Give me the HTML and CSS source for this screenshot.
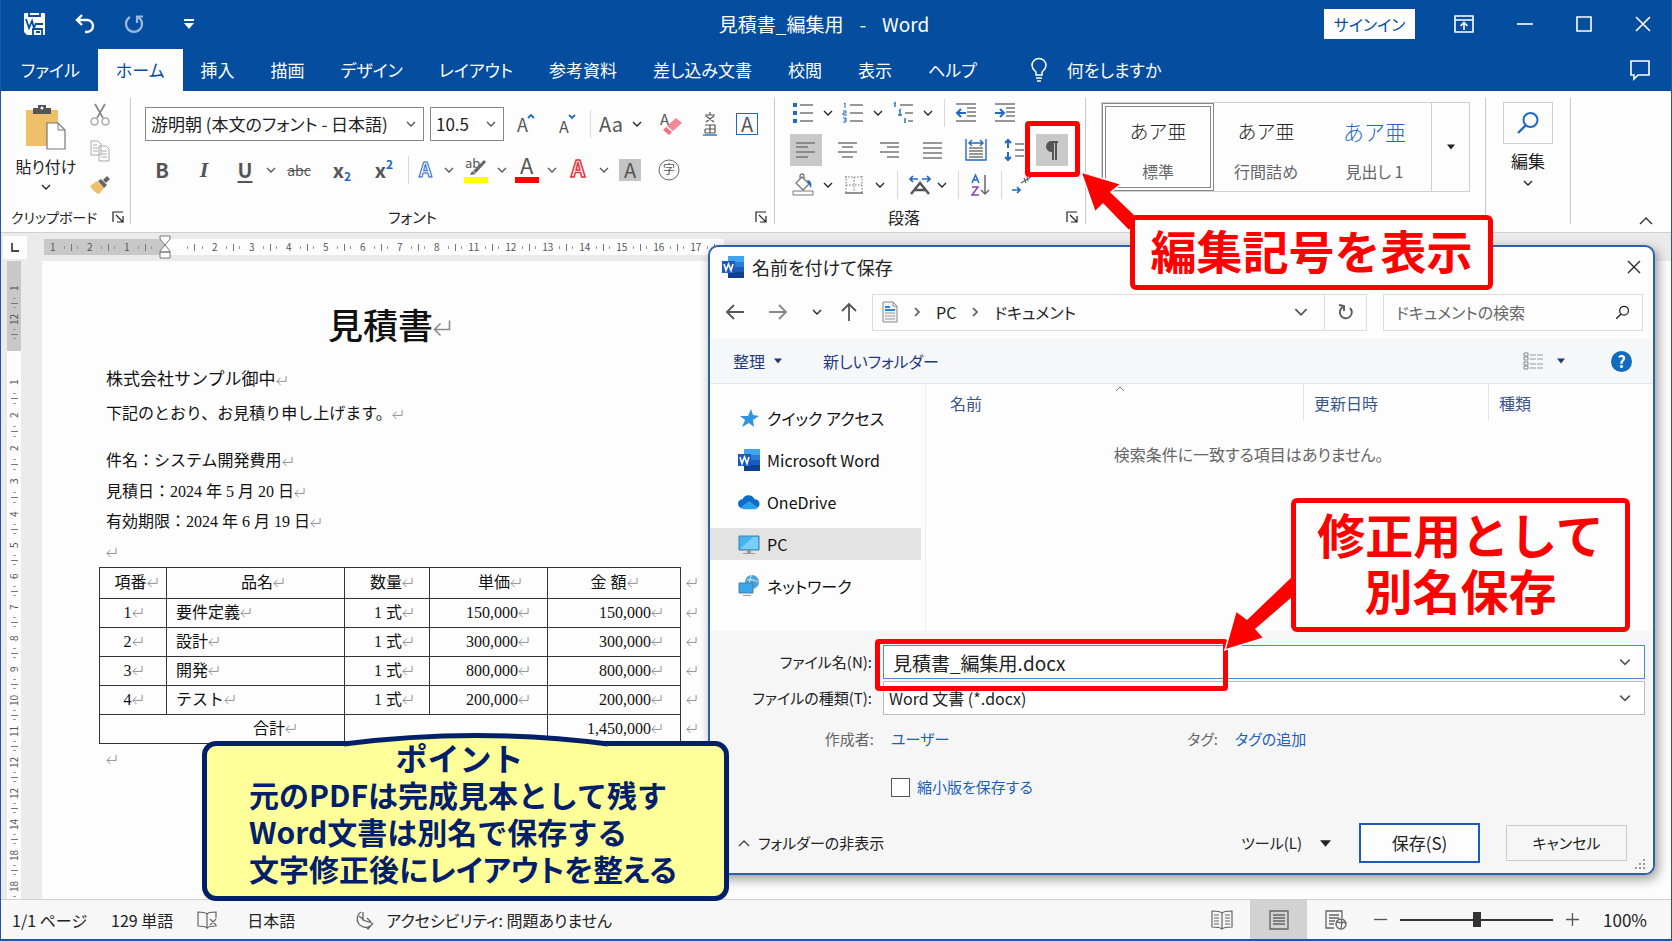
FILE: index.html
```html
<!DOCTYPE html>
<html lang="ja">
<head>
    <meta charset="UTF-8">
    <meta name="viewport" content="width=device-width, initial-scale=1.0">
    <title>見積書_編集用 - Word</title>
    <link rel="stylesheet" href="styles.css">
</head>

<body>
    <!-- 共通アイコン -->
    <svg class="defs" aria-hidden="true">
        <symbol id="down" viewBox="0 0 10 10"><path d="M1 3l4 4 4-4" fill="none" stroke="currentColor" stroke-width="1.3"/></symbol>
        <symbol id="tri" viewBox="0 0 10 10"><path d="M0 2h10L5 8z" fill="currentColor"/></symbol>
        <symbol id="ret" viewBox="0 0 12 12"><path d="M11 1v6H1M5 3L1 7l4 4" fill="none" stroke="currentColor"/></symbol>
        <symbol id="launch" viewBox="0 0 12 12"><path d="M1 11V1h10M4 4l7 7M11 5v6H5" fill="none" stroke="currentColor" stroke-width="1.2"/></symbol>
        <symbol id="word" viewBox="0 0 22 22">
            <path d="M6 0h16v6H6z" fill="#41a5ee"/><path d="M6 6h16v5H6z" fill="#2b7cd3"/><path d="M6 11h16v5H6z" fill="#185abd"/><path d="M6 16h16v6H6z" fill="#103f91"/>
            <path d="M0 5h13v12H0z" fill="#185abd"/><path d="M2 8l2 6.500 2.500-6.500L9 14.500 11 8" fill="none" stroke="#fff" stroke-width="1.6"/>
        </symbol>
        <symbol id="search" viewBox="0 0 24 24"><circle cx="14.500" cy="9" r="7" fill="none" stroke="currentColor" stroke-width="2"/><path d="M10 14l-8 8" stroke="currentColor" stroke-width="2.400"/></symbol>
    </svg>

    <div class="app">
        <!-- タイトルバー -->
        <header class="titlebar">
            <div class="quick">
                <button class="save" aria-label="上書き保存"><svg width="23" height="24" viewBox="0 0 23 24"><path d="M2 1h19a1 1 0 0 1 1 1v20a1 1 0 0 1-1 1H4l-3-3V2a1 1 0 0 1 1-1z" fill="#fff"/><path d="M6 0v4h11V0M3 7l3 9 3-7 2 7 2-5M13 12h7M10 23v-6h9v6M13 20h4" fill="none" stroke="#054d9f" stroke-width="1.800"/></svg></button>
                <button aria-label="元に戻す"><svg width="20" height="20" viewBox="0 0 20 20"><path d="M7 1L2 6l5 5M2 6h10a5.500 5.500 0 0 1 0 12h-2" fill="none" stroke="#fff" stroke-width="2.400"/></svg></button>
                <button aria-label="やり直し"><svg width="20" height="20" viewBox="0 0 20 20"><path d="M6 3a8 8 0 1 0 8 0M13 9V2.500h6" fill="none" stroke="#9bb7dc" stroke-width="2.200"/></svg></button>
                <button aria-label="カスタマイズ"><svg width="12" height="12" viewBox="0 0 12 12"><path d="M1 1h10v2H1zM1 5h10l-5 6z" fill="#fff"/></svg></button>
            </div>
            <div class="doc-title"><span>見積書_編集用</span><span>-</span><span>Word</span></div>
            <div class="window">
                <button class="signin">サインイン</button>
                <button aria-label="リボンの表示"><svg width="20" height="18" viewBox="0 0 20 18"><path d="M1 1h18v16H1zM1 5h18M10 15V8M6.500 11L10 7.500l3.500 3.500" fill="none" stroke="#fff" stroke-width="1.600"/></svg></button>
                <button aria-label="最小化"><svg width="16" height="16" viewBox="0 0 16 16"><path d="M0 8h16" stroke="#fff" stroke-width="1.600"/></svg></button>
                <button aria-label="最大化"><svg width="16" height="16" viewBox="0 0 16 16"><path d="M1 1h14v14H1z" fill="none" stroke="#fff" stroke-width="1.600"/></svg></button>
                <button aria-label="閉じる"><svg width="16" height="16" viewBox="0 0 16 16"><path d="M1 1l14 14M15 1L1 15" stroke="#fff" stroke-width="1.600"/></svg></button>
            </div>
        </header>

        <!-- タブ -->
        <nav class="tabs">
            <a href="#">ファイル</a>
            <a class="active" href="#">ホーム</a>
            <a href="#">挿入</a>
            <a href="#">描画</a>
            <a href="#">デザイン</a>
            <a href="#">レイアウト</a>
            <a href="#">参考資料</a>
            <a href="#">差し込み文書</a>
            <a href="#">校閲</a>
            <a href="#">表示</a>
            <a href="#">ヘルプ</a>
            <a class="tell" href="#"><svg width="16" height="24" viewBox="0 0 16 24"><path d="M5 17v-3C3 12 1 10.500 1 7.500a7 7 0 0 1 14 0c0 3-2 4.500-4 6.500v3zM5 20h6M6 23h4" fill="none" stroke="#fff" stroke-width="1.500"/></svg>何をしますか</a>
            <button class="comment" aria-label="コメント"><svg width="20" height="20" viewBox="0 0 20 20"><path d="M1 1h18v14H8l-4 4v-4H1z" fill="none" stroke="#fff" stroke-width="1.600"/></svg></button>
        </nav>

        <!-- リボン -->
        <div class="ribbon">
            <section class="group clipboard">
                <div class="clip-body">
                    <button class="paste">
                        <svg width="42" height="45" viewBox="0 0 42 45"><path d="M1 5h32v36H1z" fill="#eec06a"/><path d="M8 3h5V0h8v3h5v6H8z" fill="#555"/><circle cx="17" cy="3" r="1.500" fill="#fff"/><path d="M22 18h11l7 7v19H22z" fill="#fff" stroke="#777" stroke-width="1.200"/><path d="M33 18v7h7" fill="none" stroke="#777"/></svg>
                        <span>貼り付け</span>
                        <svg width="10" height="10"><use href="#down"/></svg>
                    </button>
                    <div class="clip-side">
                        <button aria-label="切り取り"><svg width="20" height="22" viewBox="0 0 20 22"><path d="M5 0l8 14M15 0L7 14" stroke="#8a8a8a" stroke-width="1.800"/><circle cx="4.500" cy="17.500" r="3.500" fill="none" stroke="#a9adb5" stroke-width="1.600"/><circle cx="15.500" cy="17.500" r="3.500" fill="none" stroke="#a9adb5" stroke-width="1.600"/></svg></button>
                        <button aria-label="コピー"><svg width="20" height="22" viewBox="0 0 20 22"><path d="M1 1h7l3 3v11H1zM9 6h7l3 3v12H9z" fill="#fff" stroke="#aaa"/><path d="M3 5h4M3 8h5M3 11h5M11 11h6M11 14h6M11 17h6" stroke="#aaa"/></svg></button>
                        <button aria-label="書式のコピー"><svg width="20" height="18" viewBox="0 0 20 18"><path d="M7 5l7 7-5 6c-3-1-7-4-9-8z" fill="#eec06a"/><path d="M8 5l3-2 6 6-3 3zM13 4l4-4 3 3-4 4z" fill="#666"/></svg></button>
                    </div>
                </div>
                <footer><span>クリップボード</span><svg width="12" height="12"><use href="#launch"/></svg></footer>
            </section>

            <section class="group font">
                <div class="font-row1">
                    <label class="combo"><select aria-label="フォント"><option>游明朝 (本文のフォント - 日本語)</option></select><svg width="10" height="10"><use href="#down"/></svg></label>
                    <label class="combo"><select aria-label="サイズ"><option>10.5</option></select><svg width="10" height="10"><use href="#down"/></svg></label>
                    <button aria-label="拡大"><svg width="18" height="20" viewBox="0 0 18 20"><text x="0" y="18" class="g" font-size="18">A</text><path d="M11 4l3-3 3 3" fill="none" stroke="#2368c4" stroke-width="1.800"/></svg></button>
                    <button aria-label="縮小"><svg width="18" height="20" viewBox="0 0 18 20"><text x="0" y="19" class="g" font-size="16">A</text><path d="M10 1l3 3 3-3" fill="none" stroke="#2368c4" stroke-width="1.800"/></svg></button>
                    <i class="sep"></i>
                    <button class="aa">Aa</button>
                    <svg width="10" height="10"><use href="#down"/></svg>
                    <button aria-label="書式のクリア"><svg width="22" height="24" viewBox="0 0 22 24"><text x="0" y="13" class="g" font-size="15">A</text><path d="M16 6l6 5-9 8-6-5z" fill="#f28a94"/><path d="M6 15l6 5-3 3-6-5z" fill="#ef7480"/></svg></button>
                    <button aria-label="ルビ"><svg width="14" height="24" viewBox="0 0 14 24"><path d="M2 3h10M7 0v3M3 10l8-6M3 4l8 6M2 13h10v8M2 17h10M2 21h10M2 17v4M7 13v8" fill="none" stroke="#555" stroke-width="1.200"/><path d="M0 23h14" stroke="#2368c4" stroke-width="1.400"/></svg></button>
                    <button class="boxed">A</button>
                </div>
                <div class="font-row2">
                    <button><b>B</b></button>
                    <button class="italic">I</button>
                    <button class="under">U</button>
                    <svg width="10" height="10"><use href="#down"/></svg>
                    <button class="strike">abc</button>
                    <button class="script">x<sub>2</sub></button>
                    <button class="script">x<sup>2</sup></button>
                    <i class="sep"></i>
                    <button aria-label="文字の効果"><svg width="18" height="20" viewBox="0 0 18 20"><text x="2" y="17" font-size="20" font-weight="700" fill="#fff" stroke="#2368c4">A</text></svg></button>
                    <svg width="10" height="10"><use href="#down"/></svg>
                    <button aria-label="蛍光ペン"><svg width="24" height="26" viewBox="0 0 24 26"><text x="1" y="11" class="g" font-size="13">ab</text><path d="M20 3l2 2-10 11-3-2zM8 14l4 3-6 1z" fill="#666"/><path d="M0 20h24v6H0z" fill="#ff0"/></svg></button>
                    <svg width="10" height="10"><use href="#down"/></svg>
                    <button aria-label="文字の色"><svg width="24" height="26" viewBox="0 0 24 26"><text x="5" y="17" class="g" font-size="22">A</text><path d="M0 20h24v6H0z" fill="red"/></svg></button>
                    <svg width="10" height="10"><use href="#down"/></svg>
                    <button aria-label="囲み"><svg width="18" height="20" viewBox="0 0 18 20"><text x="2" y="17" font-size="22" font-weight="700" fill="#fff" stroke="#e8323c" stroke-width="1.500">A</text></svg></button>
                    <svg width="10" height="10"><use href="#down"/></svg>
                    <button class="shade">A</button>
                    <button aria-label="囲い文字"><svg width="22" height="22" viewBox="0 0 22 22"><circle cx="11" cy="11" r="10" fill="none" stroke="#666"/><text x="5" y="15" class="g" font-size="12">字</text></svg></button>
                </div>
                <footer class="mid"><span>フォント</span><svg width="12" height="12"><use href="#launch"/></svg></footer>
            </section>

            <section class="group para">
                <div class="para-row1">
                    <button aria-label="箇条書き"><svg width="20" height="20" viewBox="0 0 20 20"><path d="M0 0h4v4H0zM0 8h4v4H0zM0 16h4v4H0z" fill="#2368c4"/><path d="M7 2h13M7 10h13M7 18h13" class="l"/></svg></button>
                    <svg width="10" height="10"><use href="#down"/></svg>
                    <button aria-label="段落番号"><svg width="20" height="20" viewBox="0 0 20 20"><path d="M1 1l1-1v5M0 8h3v2H0v2h4M0 15h3v4H0M1 17h2" fill="none" stroke="#2368c4"/><path d="M7 2h13M7 10h13M7 18h13" class="l"/></svg></button>
                    <svg width="10" height="10"><use href="#down"/></svg>
                    <button aria-label="アウトライン"><svg width="20" height="20" viewBox="0 0 20 20"><path d="M1 1l1-1v4M6 8l1-1v5M5 12h4M12 15v5" fill="none" stroke="#2368c4" stroke-width="1.400"/><path d="M7 2h13M12 10h8M15 18h5" class="l"/></svg></button>
                    <svg width="10" height="10"><use href="#down"/></svg>
                    <i class="sep"></i>
                    <button aria-label="インデント減"><svg width="20" height="20" viewBox="0 0 20 20"><path d="M0 1h20M11 5h9M11 9h9M11 13h9M0 18h20" class="l"/><path d="M10 10H1M5 6l-4 4 4 4" fill="none" stroke="#2368c4" stroke-width="2"/></svg></button>
                    <button aria-label="インデント増"><svg width="20" height="20" viewBox="0 0 20 20"><path d="M0 1h20M11 5h9M11 9h9M11 13h9M0 18h20" class="l"/><path d="M0 10h9M5 6l4 4-4 4" fill="none" stroke="#2368c4" stroke-width="2"/></svg></button>
                </div>
                <div class="para-row2">
                    <button class="on" aria-label="左揃え"><svg width="20" height="16" viewBox="0 0 20 16"><path d="M0 1h19M0 5h12M0 10h19M0 15h12" class="l"/></svg></button>
                    <button aria-label="中央揃え"><svg width="20" height="16" viewBox="0 0 20 16"><path d="M0 1h19M4 5h11M0 10h19M4 15h11" class="l"/></svg></button>
                    <button aria-label="右揃え"><svg width="20" height="16" viewBox="0 0 20 16"><path d="M0 1h19M7 5h12M0 10h19M7 15h12" class="l"/></svg></button>
                    <button aria-label="両端揃え"><svg width="20" height="17" viewBox="0 0 20 17"><path d="M0 1h19M0 6h19M0 11h19M0 16h19" class="l"/></svg></button>
                    <button aria-label="均等割り付け"><svg width="22" height="22" viewBox="0 0 22 22"><path d="M1 0v21h20V0M4 4h14M7 1L4 4l3 3M15 1l3 3-3 3" fill="none" stroke="#2368c4" stroke-width="1.400"/><path d="M4 9h14M4 12h14M4 15h14M4 18h14" class="l"/></svg></button>
                    <button aria-label="行間"><svg width="20" height="22" viewBox="0 0 20 22"><path d="M4 1v8M1 4l3-3 3 3M4 13v8M1 18l3 3 3-3" fill="none" stroke="#2368c4" stroke-width="2"/><path d="M11 5h9M11 11h9M11 17h9" class="l"/></svg></button>
                    <button class="on" aria-label="編集記号の表示"><svg width="14" height="19" viewBox="0 0 14 19"><path d="M6 0h7v2h-1v17h-2V2H9v17H7v-8a5.500 5.500 0 0 1-1-11z" fill="#555"/></svg></button>
                </div>
                <div class="para-row3">
                    <button aria-label="塗りつぶし"><svg width="22" height="22" viewBox="0 0 22 22"><path d="M10 3l7 7-6 6-7-7zM8 6V2a2 2 0 0 1 4 0v3" fill="#fff" stroke="#777" stroke-width="1.300"/><path d="M15 6c4 0 5 4 4 8l-3-5z" fill="#2368c4"/><path d="M1 17h20v4H1z" fill="#fff" stroke="#777"/></svg></button>
                    <svg width="10" height="10"><use href="#down"/></svg>
                    <button aria-label="罫線"><svg width="18" height="18" viewBox="0 0 18 18"><path d="M1 0v17M17 0v17M0 1h18M9 1v16M1 9h16" fill="none" stroke="#777" stroke-dasharray="1.500 1.500"/><path d="M0 17h18" stroke="#777" stroke-width="1.600"/></svg></button>
                    <svg width="10" height="10"><use href="#down"/></svg>
                    <i class="sep"></i>
                    <button aria-label="拡張書式"><svg width="22" height="20" viewBox="0 0 22 20"><path d="M1 4h8M4 1L1 4l3 3M13 4h8M18 1l3 3-3 3" fill="none" stroke="#2368c4" stroke-width="1.700"/><path d="M2 19l9-11 9 11M6 15h10" fill="none" stroke="#555" stroke-width="2.400"/></svg></button>
                    <svg width="10" height="10"><use href="#down"/></svg>
                    <i class="sep"></i>
                    <button aria-label="並べ替え"><svg width="18" height="22" viewBox="0 0 18 22"><path d="M1 9l3.500-8L8 9M2 6h5" fill="none" stroke="#2368c4" stroke-width="1.500"/><path d="M1 13h6l-6 8h7" fill="none" stroke="#8a3fb5" stroke-width="1.500"/><path d="M14 1v19M10 16l4 4 4-4" fill="none" stroke="#666" stroke-width="1.500"/></svg></button>
                    <i class="sep"></i>
                    <button aria-label="タブ"><svg width="20" height="20" viewBox="0 0 20 20"><path d="M0 15h8M5 12l3 3-3 3" fill="none" stroke="#2368c4" stroke-width="1.700"/><path d="M9 8l10-6M12 3l2 5M15 2l1 4" fill="none" stroke="#666" stroke-width="1.300"/></svg></button>
                </div>
                <footer><span>段落</span><svg width="12" height="12"><use href="#launch"/></svg></footer>
            </section>

            <section class="group styles">
                <div class="gallery">
                    <button class="style selected"><span>あア亜</span><small>標準</small></button>
                    <button class="style"><span>あア亜</span><small>行間詰め</small></button>
                    <button class="style heading"><span>あア亜</span><small>見出し 1</small></button>
                    <button class="more" aria-label="その他"><svg width="8" height="8"><use href="#tri"/></svg></button>
                </div>
            </section>

            <section class="group edit">
                <button class="find" aria-label="検索"><svg width="24" height="24"><use href="#search"/></svg></button>
                <span>編集</span>
                <svg width="10" height="10"><use href="#down"/></svg>
            </section>
            <button class="collapse" aria-label="リボンを折りたたむ"><svg width="14" height="9" viewBox="0 0 14 9"><path d="M1 8l6-6 6 6" fill="none" stroke="#333" stroke-width="1.400"/></svg></button>
        </div>

        <!-- ルーラー -->
        <div class="ruler-row">
            <div class="tab-stop"><svg width="8" height="9" viewBox="0 0 8 9"><path d="M1 0v8h7" fill="none" stroke="#444" stroke-width="1.800"/></svg></div>
            <div class="ruler">
                <div class="margin" id="rulerMargin"></div>
                <svg class="indent" width="12" height="24" viewBox="0 0 12 24"><path d="M1 1h10v3l-5 6-5-6zM6 10l5 6v1H1v-1zM1 17h10v6H1z" fill="#fff" stroke="#777"/></svg>
                <div class="scale" id="rulerScale"></div>
            </div>
        </div>

        <div class="workspace">
            <div class="vruler">
                <div class="vmargin" id="vMargin"></div>
                <div class="vscale" id="vScale"></div>
            </div>
            <!-- 文書 -->
            <main class="page">
                <h1>見積書<svg class="mark big"><use href="#ret"/></svg></h1>
                <p class="to">株式会社サンプル御中<svg class="mark"><use href="#ret"/></svg></p>
                <p class="lead">下記のとおり、お見積り申し上げます。<svg class="mark"><use href="#ret"/></svg></p>
                <p class="subject">件名：システム開発費用<svg class="mark"><use href="#ret"/></svg></p>
                <p>見積日：2024 年 5 月 20 日<svg class="mark"><use href="#ret"/></svg></p>
                <p>有効期限：2024 年 6 月 19 日<svg class="mark"><use href="#ret"/></svg></p>
                <p><svg class="mark"><use href="#ret"/></svg></p>
                <table class="quote">
                    <colgroup><col class="c1"><col class="c2"><col class="c3"><col class="c4"><col class="c5"><col class="c6"></colgroup>
                    <thead>
                        <tr><th class="no">項番<svg class="mark"><use href="#ret"/></svg></th><th class="item">品名<svg class="mark"><use href="#ret"/></svg></th><th class="qty">数量<svg class="mark"><use href="#ret"/></svg></th><th class="unit">単価<svg class="mark"><use href="#ret"/></svg></th><th>金 額<svg class="mark"><use href="#ret"/></svg></th><td class="end"><svg class="mark"><use href="#ret"/></svg></td></tr>
                    </thead>
                    <tbody>
                        <tr><td>1<svg class="mark"><use href="#ret"/></svg></td><td class="name">要件定義<svg class="mark"><use href="#ret"/></svg></td><td class="qty">1 式<svg class="mark"><use href="#ret"/></svg></td><td class="num">150,000<svg class="mark"><use href="#ret"/></svg></td><td class="num">150,000<svg class="mark"><use href="#ret"/></svg></td><td class="end"><svg class="mark"><use href="#ret"/></svg></td></tr>
                        <tr><td>2<svg class="mark"><use href="#ret"/></svg></td><td class="name">設計<svg class="mark"><use href="#ret"/></svg></td><td class="qty">1 式<svg class="mark"><use href="#ret"/></svg></td><td class="num">300,000<svg class="mark"><use href="#ret"/></svg></td><td class="num">300,000<svg class="mark"><use href="#ret"/></svg></td><td class="end"><svg class="mark"><use href="#ret"/></svg></td></tr>
                        <tr><td>3<svg class="mark"><use href="#ret"/></svg></td><td class="name">開発<svg class="mark"><use href="#ret"/></svg></td><td class="qty">1 式<svg class="mark"><use href="#ret"/></svg></td><td class="num">800,000<svg class="mark"><use href="#ret"/></svg></td><td class="num">800,000<svg class="mark"><use href="#ret"/></svg></td><td class="end"><svg class="mark"><use href="#ret"/></svg></td></tr>
                        <tr><td>4<svg class="mark"><use href="#ret"/></svg></td><td class="name">テスト<svg class="mark"><use href="#ret"/></svg></td><td class="qty">1 式<svg class="mark"><use href="#ret"/></svg></td><td class="num">200,000<svg class="mark"><use href="#ret"/></svg></td><td class="num">200,000<svg class="mark"><use href="#ret"/></svg></td><td class="end"><svg class="mark"><use href="#ret"/></svg></td></tr>
                        <tr><td class="total" colspan="2">合計<svg class="mark"><use href="#ret"/></svg></td><td colspan="2"></td><td class="num">1,450,000<svg class="mark"><use href="#ret"/></svg></td><td class="end"><svg class="mark"><use href="#ret"/></svg></td></tr>
                    </tbody>
                </table>
                <p><svg class="mark"><use href="#ret"/></svg></p>
            </main>
        </div>

        <!-- ステータスバー -->
        <footer class="status">
            <span class="pages">1/1 ページ</span>
            <span class="words">129 単語</span>
            <svg class="proof" width="20" height="18" viewBox="0 0 20 18"><path d="M10 3C8 1 4 1 1 1v14c3 0 7 0 9 2V3c1-2 5-2 9-2v6M19 14v1c-3 0-7 0-9 2M13 8l6 6M19 8l-6 6" fill="none" stroke="#666" stroke-width="1.200"/></svg>
            <span class="lang">日本語</span>
            <svg class="acc" width="20" height="20" viewBox="0 0 20 20"><path d="M7 2a8 8 0 1 0 9 14M5 6l5 4M9 2v8l9 3M12 17l2 2 5-6M13 8l4 4" fill="none" stroke="#666" stroke-width="1.300"/></svg>
            <span>アクセシビリティ: 問題ありません</span>
            <div class="views">
                <button aria-label="閲覧モード"><svg width="22" height="20" viewBox="0 0 22 20"><path d="M11 3C9 1 5 1 1 1v16c4 0 8 0 10 2 2-2 6-2 10-2V1c-4 0-8 0-10 2zv16M3 5h5M3 8h5M3 11h5M3 14h5M14 5h5M14 8h5M14 11h5M14 14h5" fill="none" stroke="#666" stroke-width="1.200"/></svg></button>
                <button class="on" aria-label="印刷レイアウト"><svg width="20" height="20" viewBox="0 0 20 20"><path d="M1 1h18v18H1zM4 5h12M4 8h12M4 11h12M4 14h12" fill="none" stroke="#666" stroke-width="1.400"/></svg></button>
                <button aria-label="Web レイアウト"><svg width="22" height="20" viewBox="0 0 22 20"><path d="M9 18H1V1h16v7M4 5h10M4 8h10M4 11h6M4 14h5" fill="none" stroke="#666" stroke-width="1.300"/><circle cx="16" cy="14" r="5" fill="#fff" stroke="#666" stroke-width="1.400"/><path d="M12 12l5 1-1 5M16 9l1 3 4 1" fill="none" stroke="#666" stroke-width="1.300"/></svg></button>
            </div>
            <button class="zoom" aria-label="縮小"><svg width="13" height="13" viewBox="0 0 13 13"><path d="M0 6.500h13" stroke="#555" stroke-width="1.300"/></svg></button>
            <input class="slider" type="range" min="0" max="100" value="50" aria-label="ズーム">
            <button class="zoom" aria-label="拡大"><svg width="13" height="13" viewBox="0 0 13 13"><path d="M0 6.500h13M6.500 0v13" stroke="#555" stroke-width="1.300"/></svg></button>
            <span class="percent">100%</span>
        </footer>

        <!-- 名前を付けて保存 -->
        <div class="dialog" role="dialog" aria-labelledby="dlgTitle">
            <div class="dlg-title">
                <svg width="22" height="22"><use href="#word"/></svg>
                <span id="dlgTitle">名前を付けて保存</span>
                <button aria-label="閉じる"><svg width="14" height="14" viewBox="0 0 14 14"><path d="M1 1l12 12M13 1L1 13" stroke="#222" stroke-width="1.300"/></svg></button>
            </div>
            <div class="dlg-nav">
                <button aria-label="戻る"><svg width="18" height="16" viewBox="0 0 18 16"><path d="M18 8H1M8 1L1 8l7 7" fill="none" stroke="#555" stroke-width="1.800"/></svg></button>
                <button aria-label="進む"><svg width="18" height="16" viewBox="0 0 18 16"><path d="M0 8h17M10 1l7 7-7 7" fill="none" stroke="#888" stroke-width="1.800"/></svg></button>
                <button class="hist" aria-label="履歴"><svg width="10" height="10"><use href="#down"/></svg></button>
                <button class="up" aria-label="上へ"><svg width="16" height="18" viewBox="0 0 16 18"><path d="M8 18V1M1 8l7-7 7 7" fill="none" stroke="#555" stroke-width="1.800"/></svg></button>
                <div class="address">
                    <svg width="16" height="22" viewBox="0 0 16 22"><path d="M1 1h10l4 4v16H1z" fill="#f4f4f4" stroke="#888"/><path d="M11 1v4h4" fill="none" stroke="#888"/><path d="M3 6h5M3 9h10" stroke="#2e83d6" stroke-width="2"/><path d="M3 12h10M3 15h10M3 18h10" stroke="#999"/></svg>
                    <svg class="gt" width="8" height="10" viewBox="0 0 8 10"><path d="M2 1l4 4-4 4" fill="none" stroke="#555" stroke-width="1.600"/></svg>
                    <span>PC</span>
                    <svg class="gt" width="8" height="10" viewBox="0 0 8 10"><path d="M2 1l4 4-4 4" fill="none" stroke="#555" stroke-width="1.600"/></svg>
                    <span>ドキュメント</span>
                    <svg class="drop" width="14" height="14"><use href="#down"/></svg>
                </div>
                <button class="refresh" aria-label="更新"><svg width="16" height="16" viewBox="0 0 16 16"><path d="M12 4a6 6 0 1 1-7-1M1 1l5 1v5" fill="none" stroke="#555" stroke-width="1.800"/></svg></button>
                <label class="search"><input type="text" placeholder="ドキュメントの検索" aria-label="検索"><svg width="15" height="15"><use href="#search"/></svg></label>
            </div>
            <div class="dlg-tools">
                <button>整理<svg width="8" height="8"><use href="#tri"/></svg></button>
                <button>新しいフォルダー</button>
                <button class="view" aria-label="表示方法"><svg width="20" height="18" viewBox="0 0 20 18"><path d="M1 1h4v3H1zM1 5h4v3H1zM1 10h4v3H1zM1 14h4v3H1z" fill="none" stroke="#888"/><path d="M7 3h6M14 3h6M7 7h6M14 7h6M7 12h6M14 12h6M7 16h6M14 16h6" stroke="#999"/></svg><svg width="8" height="8"><use href="#tri"/></svg></button>
                <button class="help" aria-label="ヘルプ">?</button>
            </div>
            <div class="dlg-main">
                <ul class="places">
                    <li><svg width="22" height="22" viewBox="0 0 22 22"><path d="M13 2l2 6 6 1-6 4 1 7-5-4-7 4 3-7-5-4h8z" fill="#2f95e0"/></svg>クイック アクセス</li>
                    <li><svg width="22" height="22"><use href="#word"/></svg>Microsoft Word</li>
                    <li><svg width="22" height="16" viewBox="0 0 24 16"><path d="M5 15a5 5 0 0 1 0-10 7 7 0 0 1 13 0 5 5 0 0 1 1 10z" fill="#0f6cc9"/><path d="M3 14l9-7 10 7-3 2H6z" fill="#2aa2ea"/></svg>OneDrive</li>
                    <li class="on"><svg width="22" height="22" viewBox="0 0 22 22"><path d="M1 3h20v14H1z" fill="#44b4ee" stroke="#4a7fa5"/><path d="M2 16L15 4h5v12z" fill="#77cef8"/><path d="M9 17h4v3H9zM5 20h12v1H5z" fill="#999"/></svg>PC</li>
                    <li><svg width="22" height="22" viewBox="0 0 22 22"><circle cx="14" cy="7" r="7" fill="#4da3d8"/><path d="M9 5c4-1 8 0 11 2M14 0c-3 4-3 9 0 14" fill="none" stroke="#d4effc"/><path d="M1 8h14v10H1z" fill="#38a8e8" stroke="#4a7fa5"/><path d="M5 20h8v1H5z" fill="#999"/></svg>ネットワーク</li>
                </ul>
                <div class="files">
                    <div class="cols">
                        <span>名前<svg width="10" height="6" viewBox="0 0 10 6"><path d="M1 5l4-4 4 4" fill="none" stroke="#777"/></svg></span>
                        <span>更新日時</span>
                        <span>種類</span>
                    </div>
                    <p>検索条件に一致する項目はありません。</p>
                </div>
            </div>
            <div class="dlg-form">
                <div class="fields">
                    <label for="fname">ファイル名(N):</label>
                    <div class="combo name"><input id="fname" type="text" value="見積書_編集用.docx"><svg width="12" height="12"><use href="#down"/></svg></div>
                    <label for="ftype">ファイルの種類(T):</label>
                    <div class="combo type"><select id="ftype"><option>Word 文書 (*.docx)</option></select><svg width="12" height="12"><use href="#down"/></svg></div>
                </div>
                <div class="meta">
                    <span>作成者:</span><a href="#">ユーザー</a><span>タグ:</span><a href="#">タグの追加</a>
                </div>
                <label class="thumb"><input type="checkbox">縮小版を保存する</label>
                <div class="actions">
                    <button class="plain"><svg width="12" height="8" viewBox="0 0 12 8"><path d="M1 7l5-5 5 5" fill="none" stroke="#444" stroke-width="1.400"/></svg>フォルダーの非表示</button>
                    <button class="plain tool">ツール(L)<svg width="11" height="11"><use href="#tri"/></svg></button>
                    <button class="ok">保存(S)</button>
                    <button class="cancel">キャンセル</button>
                </div>
            </div>
            <svg class="grip" width="12" height="12" viewBox="0 0 12 12"><path d="M8 0h2v2H8zM4 4h2v2H4zM8 4h2v2H8zM0 8h2v2H0zM4 8h2v2H4zM8 8h2v2H8z" fill="#999"/></svg>
        </div>

        <!-- 注釈 -->
        <div class="frame frame-mark"></div>
        <div class="frame frame-name"></div>
        <svg class="arrow arrow-mark" width="60" height="64" viewBox="0 0 60 64"><path d="M3 3l40 12-10 8 27 26-9 13-26-27-8 8z" fill="red" stroke="#fff" stroke-width="1.500"/></svg>
        <svg class="arrow arrow-name" width="74" height="80" viewBox="0 0 74 80"><path d="M3 76l11-39 11 8 46-44v22L34 55l8 9z" fill="red" stroke="#fff" stroke-width="1.500"/></svg>
        <div class="callout callout-mark">編集記号を表示</div>
        <div class="callout callout-name">修正用として<br>別名保存</div>
        <div class="point">
            <svg width="264" height="16" viewBox="0 0 264 16"><path d="M0 16V11Q132-8 264 11V16z" fill="#ffff99"/><path d="M0 11Q132-6 264 11" fill="none" stroke="#02206a" stroke-width="5"/></svg>
            <h2>ポイント</h2>
            <p>元のPDFは完成見本として残す</p>
            <p>Word文書は別名で保存する</p>
            <p class="tight">文字修正後にレイアウトを整える</p>
        </div>
    </div>

    <script>
        // 目盛りを並べる
        function fill(id, list) {
            var box = document.getElementById(id);
            var html = "";
            for (var i = 0; i < list.length; i++) {
                html += "<span class='cell'><b>" + list[i] + "</b><i class='dot'></i><i class='line'></i><i class='dot'></i></span>";
            }
            box.innerHTML = html;
        }
        fill("rulerMargin", ["1", "2", "1"]);
        fill("rulerScale", ["", 2, 3, 4, 5, 6, 7, 8, 11, 12, 13, 14, 15, 16, 17]);
        fill("vMargin", [1, 12]);
        fill("vScale", [1, 2, 2, 3, 4, 5, 6, 7, 8, 9, 10, 11, 12, 12, 14, 18, 18]);
    </script>
</body>

</html>
```
FILE: styles.css
```css
* {
    box-sizing: border-box;
    margin: 0;
    padding: 0;
}

body {
    font-family: "Noto Sans CJK JP", sans-serif;
    font-size: 17px;
    line-height: 24px;
    color: #222;
    font-feature-settings: "palt";
}

button, input, select {
    font: inherit;
    font-feature-settings: inherit;
    color: inherit;
    background: none;
    border: none;
    border-radius: 0;
    outline: none;
}

button {
    display: flex;
    align-items: center;
    justify-content: center;
}

select {
    appearance: none;
}

a {
    color: inherit;
    text-decoration: none;
}

svg {
    display: block;
    flex: none;
    overflow: visible;
}

.defs {
    position: absolute;
    width: 0;
    height: 0;
}

.app {
    position: relative;
    display: flex;
    flex-direction: column;
    height: 100vh;
    overflow: hidden;
    border: 1px solid #1f56a3;
    border-top: none;
    border-bottom-width: 2px;
    background: #fdfdfd;
}

/* タイトルバー */
.titlebar {
    display: grid;
    flex: none;
    grid-template-columns: 1fr auto 1fr;
    align-items: center;
    height: 48px;
    padding: 0 20px 0 22px;
    color: #fff;
    background: #054d9f;
}

.quick {
    display: flex;
    align-items: center;
    gap: 29px;
}

.quick button:last-child {
    margin-left: 10px;
}

.doc-title {
    display: flex;
    gap: 16px;
    margin-right: 26px;
    font-size: 19px;
}

.window {
    display: flex;
    align-items: center;
    justify-content: flex-end;
    gap: 43px;
}

.signin {
    width: 91px;
    height: 30px;
    margin-right: -4px;
    font-size: 16px;
    color: #054d9f;
    background: #fff;
}

/* タブ */
.tabs {
    display: flex;
    flex: none;
    height: 43px;
    padding: 1px 0 0 2px;
    color: #fff;
    background: #054d9f;
}

.tabs a {
    display: flex;
    align-items: center;
    padding: 0 18px;
}

.tabs a.active {
    color: #054d9f;
    background: #fdfdfd;
}

.tabs .tell {
    gap: 20px;
    margin-left: 18px;
}

.comment {
    margin-left: auto;
    padding: 0 21px;
}

/* リボン */
.ribbon {
    position: relative;
    display: flex;
    flex: none;
    height: 142px;
    padding: 7px 0 8px;
    border-bottom: 1px solid #d0d0d0;
    background: #fdfdfd;
}

.group {
    display: flex;
    flex-direction: column;
    border-right: 1px solid #c8c8c8;
}

.group footer {
    display: flex;
    align-items: center;
    justify-content: space-between;
    margin-top: auto;
    font-size: 16px;
    line-height: 14px;
}

.ribbon .sep {
    width: 1px;
    height: 28px;
    background: #d8d8d8;
}

.clipboard {
    width: 130px;
    padding-left: 10px;
}

.group.clipboard footer {
    padding-right: 6px;
    font-size: 14px;
}

.clip-body {
    display: flex;
    gap: 9px;
    padding-top: 4px;
}

.paste {
    flex-direction: column;
    width: 70px;
    font-size: 16px;
}

.paste span {
    margin: 4px 0;
}

.clip-side {
    display: flex;
    flex-direction: column;
    gap: 14px;
    padding-top: 2px;
}

.font {
    width: 644px;
    padding-left: 10px;
}

.font .mid {
    padding: 0 7px 0 247px;
    font-size: 15px;
}

.font-row1, .font-row2, .para-row1, .para-row2, .para-row3 {
    display: grid;
    align-items: center;
    justify-items: center;
}

.font-row1 {
    grid-template-columns: 285px 74px 44px 40px 4px 38px 14px 54px 24px 50px;
    height: 34px;
    margin-top: 9px;
    padding-left: 4px;
}

.font-row2 {
    grid-template-columns: 42px 42px 40px 12px 44px 42px 42px 6px 30px 16px 38px 14px 36px 14px 38px 14px 38px 40px;
    height: 40px;
    margin-top: 9px;
    font-size: 20px;
    color: #555;
}

.combo {
    position: relative;
    display: block;
    width: 100%;
    height: 34px;
}

.font-row1 .combo:first-child {
    padding-right: 6px;
}

.combo select, .combo input {
    width: 100%;
    height: 100%;
    padding: 0 5px;
    border: 1px solid #888;
    background: #fff;
}

.combo svg {
    position: absolute;
    top: 12px;
    right: 8px;
    color: #555;
}

.combo:first-child svg {
    right: 14px;
}

.g {
    fill: #555;
}

.l {
    fill: none;
    stroke: #777;
    stroke-width: 1.4;
}

.aa {
    font-size: 20px;
    color: #555;
}

.boxed {
    width: 22px;
    height: 22px;
    font-size: 20px;
    color: #555;
    border: 1px solid #2368c4;
}

.italic {
    font-family: "Liberation Serif", serif;
    font-size: 22px;
    font-style: italic;
    font-weight: 700;
}

.under {
    font-weight: 700;
    text-decoration: underline;
    text-underline-offset: 3px;
}

.strike {
    font-size: 14px;
    text-decoration: line-through;
}

.script {
    font-weight: 700;
}

.script sub, .script sup {
    font-size: 12px;
    color: #2368c4;
}

.script sub {
    padding-top: 12px;
}

.script sup {
    padding-bottom: 12px;
}

.shade {
    width: 22px;
    height: 22px;
    background: #c4c4c4;
}

.para {
    width: 311px;
    padding-left: 10px;
    row-gap: 6px;
}

.para footer {
    padding: 0 7px 0 103px;
}

.para-row1, .para-row2, .para-row3 {
    height: 30px;
}

.para-row1 {
    grid-template-columns: 36px 14px 36px 14px 36px 14px 18px 26px 52px;
}

.para-row2 {
    grid-template-columns: 42px 42px 42px 44px 42px 34px 42px;
}

.para-row3 {
    grid-template-columns: 36px 14px 38px 14px 20px 26px 18px 14px 30px 12px 30px;
}

.para .on {
    width: 32px;
    height: 32px;
    background: #c9c9c9;
}

.styles {
    width: 400px;
    padding: 4px 15px 0;
}

.gallery {
    display: grid;
    grid-template-columns: 112px 104px 1fr 38px;
    height: 90px;
    border: 1px solid #d0d0d0;
}

.style {
    flex-direction: column;
    gap: 14px;
    padding-top: 10px;
}

.style span {
    font-family: "Liberation Serif", "Noto Sans CJK JP", serif;
    font-size: 19px;
    font-feature-settings: normal;
    font-weight: 300;
}

.style small {
    font-size: 16px;
    color: #666;
}

.style.selected {
    border: 4px double #888;
}

.style.heading span {
    font-size: 21px;
    color: #2368c4;
}

.more {
    border: 1px solid #d0d0d0;
    border-width: 0 0 0 1px;
}

.edit {
    align-items: center;
    width: 85px;
    padding-top: 4px;
}

.find {
    width: 50px;
    height: 42px;
    margin-bottom: 5px;
    color: #2368c4;
    border: 1px solid #d0d0d0;
}

.edit > svg {
    margin-top: 5px;
}

.collapse {
    position: absolute;
    right: 18px;
    bottom: 7px;
}

/* ルーラー */
.ruler-row {
    display: flex;
    flex: none;
    align-items: center;
    height: 28px;
    padding-left: 2px;
    background: #ebebeb;
}

.tab-stop {
    display: flex;
    align-items: center;
    justify-content: center;
    width: 24px;
    height: 23px;
    margin-right: 17px;
    background: #fdfdfd;
}

.ruler {
    position: relative;
    display: flex;
    height: 16px;
    background: #fdfdfd;
}

.margin {
    display: flex;
    width: 121px;
    background: #c8c8c8;
}

.scale {
    display: flex;
}

.indent {
    position: absolute;
    left: 115px;
    top: -4px;
}

.cell {
    display: flex;
    flex: none;
    align-items: center;
    justify-content: space-around;
    width: 37px;
    font-size: 10px;
    line-height: 16px;
    color: #555;
}

.scale .cell:first-child {
    width: 41px;
}

.cell b {
    width: 12px;
    font-weight: 400;
    text-align: center;
}

.cell .dot {
    width: 1px;
    height: 3px;
    background: #999;
}

.cell .line {
    width: 1px;
    height: 7px;
    background: #777;
}

.workspace {
    display: flex;
    flex: 1;
    min-height: 0;
    background: #ebebeb;
}

.vruler {
    width: 14px;
    margin: 0 21px 0 6px;
    overflow: hidden;
    background: #fdfdfd;
}

.vmargin {
    height: 90px;
    padding-top: 18px;
    background: #c8c8c8;
}

.vscale {
    padding-top: 22px;
}

.vruler .cell {
    flex-direction: column;
    width: 14px;
    height: 31px;
}

.vscale .cell:nth-child(-n+4) {
    height: 33px;
}

.vruler .cell b {
    height: 14px;
    writing-mode: vertical-rl;
    transform: rotate(180deg);
    line-height: 12px;
}

.vruler .dot {
    width: 3px;
    height: 1px;
}

.vruler .line {
    width: 7px;
    height: 1px;
}

/* 文書 */
.page {
    flex: 1;
    padding: 37px 0 0 57px;
    font-family: "Liberation Serif", "Noto Sans CJK JP", serif;
    font-size: 16px;
    color: #111;
    background: #fdfdfd;
    font-feature-settings: normal;
}

.page h1 {
    display: flex;
    align-items: center;
    width: 581px;
    justify-content: center;
    font-size: 35px;
    line-height: 60px;
    font-weight: 500;
}

.page p {
    display: flex;
    align-items: center;
    height: 30px;
    padding-left: 7px;
}

.page .to {
    height: 34px;
    margin-top: 5px;
    font-size: 17px;
}

.page .lead {
    height: 34px;
}

.page .subject {
    height: 32px;
    margin-top: 14px;
}

.mark {
    display: inline-block;
    width: 11px;
    height: 11px;
    color: #888;
}

.mark.big {
    width: 18px;
    height: 18px;
}

.quote {
    width: 600px;
    table-layout: fixed;
    border-collapse: collapse;
}

.c1 { width: 67px; }
.c2 { width: 178px; }
.c3 { width: 85px; }
.c4 { width: 118px; }
.c5 { width: 133px; }
.c6 { width: 19px; }

.quote th, .quote td {
    height: 29px;
    border: 1px solid #333;
    font-weight: 400;
    line-height: 20px;
    text-align: center;
}

.quote th {
    height: 31px;
}

.quote .no {
    padding-left: 6px;
}

.quote .item {
    padding-left: 14px;
}

.quote td.name {
    padding-left: 9px;
    text-align: left;
}

.quote .qty {
    padding-right: 16px;
    text-align: right;
}

.quote .unit {
    padding-right: 26px;
    text-align: right;
}

.quote td.num {
    padding-right: 18px;
    text-align: right;
}

.quote td.total {
    padding-right: 48px;
    text-align: right;
}

.quote td.end {
    border: none;
    padding-left: 5px;
    text-align: left;
}

/* ステータスバー */
.status {
    display: flex;
    flex: none;
    align-items: center;
    height: 40px;
    padding-left: 11px;
    font-size: 16px;
    border-top: 1px solid #d0d0d0;
    background: #f7f7f7;
}

.pages, .words {
    margin-right: 24px;
}

.lang {
    margin: 0 59px 0 30px;
}

.acc {
    margin-right: 12px;
}

.views {
    display: flex;
    align-self: stretch;
    margin-left: auto;
    margin-right: 10px;
}

.views button {
    width: 57px;
}

.views .on {
    background: #d2d2d2;
}

.slider {
    appearance: none;
    width: 153px;
    height: 16px;
    margin: 0 13px;
    background: linear-gradient(#333, #333) center / 100% 2px no-repeat;
}

.slider::-webkit-slider-thumb {
    appearance: none;
    width: 8px;
    height: 15px;
    background: #333;
}

.percent {
    margin: 0 24px;
    font-size: 17px;
}

/* ダイアログ */
.dialog {
    position: absolute;
    top: 245px;
    left: 707px;
    right: 16px;
    bottom: 64px;
    display: flex;
    flex-direction: column;
    overflow: hidden;
    border: 2px solid #2b62ab;
    border-radius: 10px;
    background: #fdfdfd;
    font-size: 16px;
    box-shadow: 3px 4px 12px rgba(0, 0, 0, .4);
}

.dlg-title {
    display: flex;
    align-items: center;
    gap: 8px;
    height: 40px;
    padding: 0 12px;
    font-size: 18px;
}

.dlg-title button {
    margin-left: auto;
}

.dlg-nav {
    display: flex;
    align-items: center;
    height: 50px;
    margin-bottom: 2px;
    padding: 0 10px 0 16px;
}

.dlg-nav button {
    margin-right: 25px;
}

.dlg-nav .hist {
    margin-right: 19px;
}

.dlg-nav .up {
    margin-right: 15px;
}

.address {
    display: flex;
    flex: 1;
    align-items: center;
    gap: 15px;
    height: 37px;
    padding: 0 16px 0 9px;
    border: 1px solid #ddd;
}

.address .drop {
    margin-left: auto;
    color: #555;
}

.dlg-nav .refresh {
    width: 42px;
    height: 37px;
    margin-right: 16px;
    border: 1px solid #ddd;
    border-left: none;
}

.search {
    position: relative;
    width: 260px;
    height: 37px;
}

.search input {
    width: 100%;
    height: 100%;
    padding: 0 12px;
    border: 1px solid #ddd;
}

.search input::placeholder {
    color: #666;
}

.search svg {
    position: absolute;
    top: 11px;
    right: 13px;
}

.dlg-tools {
    display: flex;
    align-items: center;
    height: 45px;
    padding: 0 21px 0 23px;
    color: #1f3a7a;
    border-bottom: 1px solid #e4e6ea;
    background: #f6f7f9;
}

.dlg-tools button {
    gap: 9px;
    margin-right: 41px;
}

.dlg-tools .view {
    gap: 14px;
    margin-left: auto;
    margin-right: 46px;
}

.dlg-tools .help {
    width: 21px;
    height: 21px;
    margin-right: 0;
    font-weight: 700;
    color: #fff;
    border-radius: 50%;
    background: #0f6cbd;
}

.dlg-main {
    display: flex;
    flex: 1;
}

.places {
    display: flex;
    flex-direction: column;
    gap: 10px;
    width: 216px;
    padding: 18px 4px 0 0;
    border-right: 1px solid #eee;
    list-style: none;
}

.places li {
    display: flex;
    align-items: center;
    gap: 7px;
    height: 32px;
    padding-left: 28px;
    color: #111;
}

.places .on {
    background: #e3e3e3;
}

.files {
    flex: 1;
}

.cols {
    display: grid;
    grid-template-columns: 1fr 185px 164px;
    height: 36px;
    color: #3b5788;
}

.cols span {
    position: relative;
    padding: 7px 10px 0;
    border-right: 1px solid #e4e4e4;
}

.cols span:first-child {
    padding-left: 24px;
}

.cols span:last-child {
    border-right: none;
}

.cols svg {
    position: absolute;
    top: 2px;
    left: 50%;
}

.files p {
    padding-top: 22px;
    text-align: center;
    padding-right: 82px;
    color: #666;
}

.dlg-form {
    height: 242px;
    padding: 14px 8px 0 24px;
    background: #f6f6f6;
    font-size: 15px;
}

.fields {
    display: grid;
    grid-template-columns: 138px 1fr;
    column-gap: 11px;
    row-gap: 2px;
    align-items: center;
}

.fields label {
    text-align: right;
}

.fields .combo svg {
    top: 11px;
    right: 14px;
}

.fields .name input {
    padding-left: 9px;
    font-size: 19px;
    border-color: #4a8ad4;
}

.fields .type select {
    font-size: 16px;
    border-color: #bbb;
}

.meta {
    display: grid;
    grid-template-columns: 140px 270px 40px 1fr;
    column-gap: 17px;
    margin-top: 12px;
    color: #666;
}

.meta span {
    text-align: right;
}

.meta a, .thumb {
    color: #1a5fbf;
}

.thumb {
    display: flex;
    align-items: center;
    gap: 7px;
    margin: 24px 0 0 157px;
}

.thumb input {
    appearance: none;
    width: 19px;
    height: 19px;
    border: 1px solid #555;
    background: #fff;
}

.actions {
    display: flex;
    align-items: center;
    margin-top: 24px;
    padding: 0 18px 0 4px;
}

.plain {
    gap: 8px;
}

.plain.tool {
    gap: 18px;
    margin-left: auto;
    margin-right: 28px;
}

.ok {
    width: 121px;
    height: 40px;
    margin-right: 26px;
    font-size: 17px;
    border: 2px solid #1a5cb8;
    background: #fdfdfd;
}

.cancel {
    width: 121px;
    height: 36px;
    border: 1px solid #ccc;
}

.grip {
    position: absolute;
    right: 6px;
    bottom: 2px;
}

/* 注釈 */
.frame {
    position: absolute;
    border: 5px solid red;
    border-radius: 4px;
}

.frame-mark {
    left: 1024px;
    top: 121px;
    width: 55px;
    height: 56px;
}

.frame-name {
    left: 874px;
    top: 639px;
    width: 353px;
    height: 52px;
}

.arrow {
    position: absolute;
}

.arrow-mark {
    left: 1077px;
    top: 169px;
}

.arrow-name {
    left: 1221px;
    top: 574px;
}

.callout {
    position: absolute;
    border: 5px solid red;
    border-radius: 6px;
    background: #fdfdfd;
    color: red;
    font-weight: 700;
    text-align: center;
    font-feature-settings: normal;
}

.callout-mark {
    left: 1129px;
    top: 215px;
    width: 363px;
    padding-bottom: 6px;
    font-size: 46px;
    line-height: 59px;
}

.callout-name {
    left: 1290px;
    top: 498px;
    width: 339px;
    padding: 2px 0 10px;
    font-size: 48px;
    line-height: 56px;
}

.point {
    position: absolute;
    left: 201px;
    top: 741px;
    width: 527px;
    height: 160px;
    padding-left: 42px;
    border: 5px solid #02206a;
    border-radius: 14px;
    background: #ffff99;
    color: #02206a;
    font-size: 30px;
    font-weight: 700;
    line-height: 37px;
    font-feature-settings: normal;
}

.point svg {
    position: absolute;
    left: 137px;
    top: -13px;
}

.point h2 {
    position: relative;
    margin: -8px 54px 0 0;
    font-size: 32px;
    line-height: 38px;
    text-align: center;
}

.point .tight {
    font-feature-settings: "palt";
}
```
